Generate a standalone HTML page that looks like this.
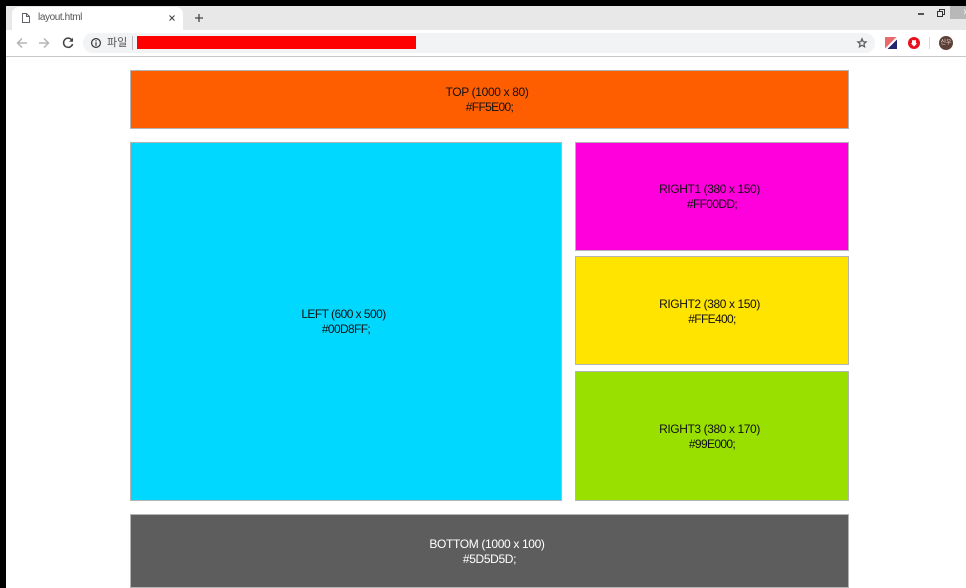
<!DOCTYPE html>
<html><head><meta charset="utf-8"><style>
html,body{margin:0;padding:0;background:#fff;width:966px;height:588px;overflow:hidden}
*{box-sizing:border-box}
.a{position:absolute}
.b{position:absolute;border:1px solid #b4b4b4;display:flex;align-items:center;justify-content:center;text-align:center;font:12px/15px "Liberation Sans","Noto Sans CJK KR",sans-serif;color:#111;letter-spacing:-.35px}
.b span{letter-spacing:-.65px}
.b i{font-style:normal;position:relative;left:-2.5px}
svg{position:absolute;overflow:visible}
</style></head><body>
<div class="a" style="left:0;top:0;width:966px;height:6px;background:#000"></div>
<div class="a" style="left:0;top:0;width:6px;height:588px;background:#000"></div>
<div class="a" style="left:6px;top:6px;width:960px;height:24px;background:#e8e8e8"></div>
<div class="a" style="left:950px;top:6px;width:16px;height:13px;background:#b8b8b8"></div>
<svg style="left:962px;top:9px" width="4" height="6"><path d="M2 0.5L6 5M6 0.5L2 5" stroke="#eee" stroke-width="1"/></svg>
<div class="a" style="left:12px;top:7px;width:171px;height:24px;background:#fff;border-radius:7px 7px 0 0"></div>
<div class="a" style="left:6px;top:30px;width:960px;height:27px;background:#fff;border-bottom:1px solid #c8c8c8"></div>
<svg style="left:22px;top:13px" width="8" height="10" viewBox="0 0 8 10"><path d="M.5.5H4.5L7.5 3.5V9.5H.5ZM4.5.5V3.5H7.5" fill="none" stroke="#5f6368"/></svg>
<div class="a" style="left:38px;top:10px;font:10px/15px 'Liberation Sans',sans-serif;color:#555;letter-spacing:-.4px">layout.html</div>
<svg style="left:169px;top:15px" width="6" height="6"><path d="M.5.5L5.5 5.5M5.5.5L.5 5.5" stroke="#444" stroke-width="1.1"/></svg>
<svg style="left:195px;top:14px" width="8" height="8"><path d="M4 0V8M0 4H8" stroke="#444" stroke-width="1.3"/></svg>
<svg style="left:918px;top:13px" width="6" height="2"><path d="M0 1H6" stroke="#222" stroke-width="1.5"/></svg>
<svg style="left:937px;top:9px" width="8" height="8"><path d="M.5 2.5H5.5V7.5H.5ZM2.5 2.5V.5H7.5V5.5H5.5" fill="none" stroke="#333"/></svg>
<svg style="left:16px;top:37px" width="12" height="12"><path d="M11 6H1.5M6 1.5L1.5 6L6 10.5" fill="none" stroke="#b5b5b5" stroke-width="1.5"/></svg>
<svg style="left:38px;top:37px" width="12" height="12"><path d="M1 6H10.5M6 1.5L10.5 6L6 10.5" fill="none" stroke="#b5b5b5" stroke-width="1.5"/></svg>
<svg style="left:62px;top:37px" width="12" height="12"><path d="M10 3.2A4.6 4.6 0 1 0 10.6 7" fill="none" stroke="#444" stroke-width="1.5"/><path d="M11 .8V4.8H7Z" fill="#444"/></svg>
<div class="a" style="left:83px;top:33px;width:792px;height:20px;background:#f1f3f4;border-radius:10px"></div>
<svg style="left:91px;top:38px" width="10" height="10"><circle cx="5" cy="5" r="4.4" fill="none" stroke="#333" stroke-width="1.2"/><path d="M5 4.2V7.8M5 2.2V3.4" stroke="#333" stroke-width="1.2"/></svg>
<div class="a" style="left:107px;top:36px;font:11px/15px 'Liberation Sans','Noto Sans CJK KR',sans-serif;color:#555">파일</div>
<div class="a" style="left:132px;top:36px;width:1px;height:14px;background:#b8babc"></div>
<div class="a" style="left:137px;top:36px;width:279px;height:13px;background:#f00"></div>
<svg style="left:857px;top:38px" width="10" height="10" viewBox="0 0 12 12"><path d="M6 1L7.4 4.4L11 4.7L8.3 7L9.1 10.6L6 8.7L2.9 10.6L3.7 7L1 4.7L4.6 4.4Z" fill="none" stroke="#555" stroke-width="1.4"/></svg>
<svg style="left:885px;top:37px" width="12" height="12"><path d="M0 0H11.5L0 11.5Z" fill="#e96a6a"/><path d="M12 .5V12H.5Z" fill="#fff"/><path d="M12 2.5V12H2.5Z" fill="#23256e"/></svg>
<svg style="left:908px;top:37px" width="12" height="12"><circle cx="6" cy="6" r="6" fill="#e8101c"/><path d="M4 3.2H8V6.2H9.2L6 9.6L2.8 6.2H4Z" fill="#fff"/></svg>
<div class="a" style="left:929px;top:37px;width:1px;height:12px;background:#d8d8d8"></div>
<div class="a" style="left:939px;top:36px;width:14px;height:14px;border-radius:50%;background:#5d4037;color:#e8dcd8;font:6px/14px 'Liberation Sans','Noto Sans CJK KR',sans-serif;text-align:center">신우</div>

<div class="b" style="left:130px;top:70px;width:719px;height:59px;background:#ff5e00"><div><i>TOP (1000 x 80)</i><br><span>#FF5E00;</span></div></div>
<div class="b" style="left:130px;top:142px;width:432px;height:359px;background:#00d8ff"><div style="letter-spacing:-.55px"><i>LEFT (600 x 500)</i><br><span>#00D8FF;</span></div></div>
<div class="b" style="left:575px;top:142px;width:274px;height:109px;background:#ff00dd"><div style="letter-spacing:-.4px"><i>RIGHT1 (380 x 150)</i><br><span>#FF00DD;</span></div></div>
<div class="b" style="left:575px;top:256px;width:274px;height:109px;background:#ffe400;padding-top:2px"><div style="letter-spacing:-.4px"><i>RIGHT2 (380 x 150)</i><br><span>#FFE400;</span></div></div>
<div class="b" style="left:575px;top:371px;width:274px;height:130px;background:#99e000;padding-top:2px"><div style="letter-spacing:-.4px"><i>RIGHT3 (380 x 170)</i><br><span>#99E000;</span></div></div>
<div class="b" style="left:130px;top:514px;width:719px;height:74px;background:#5d5d5d;color:#fff;padding-top:2px"><div><i>BOTTOM (1000 x 100)</i><br><span style="letter-spacing:-.35px">#5D5D5D;</span></div></div>
</body></html>
